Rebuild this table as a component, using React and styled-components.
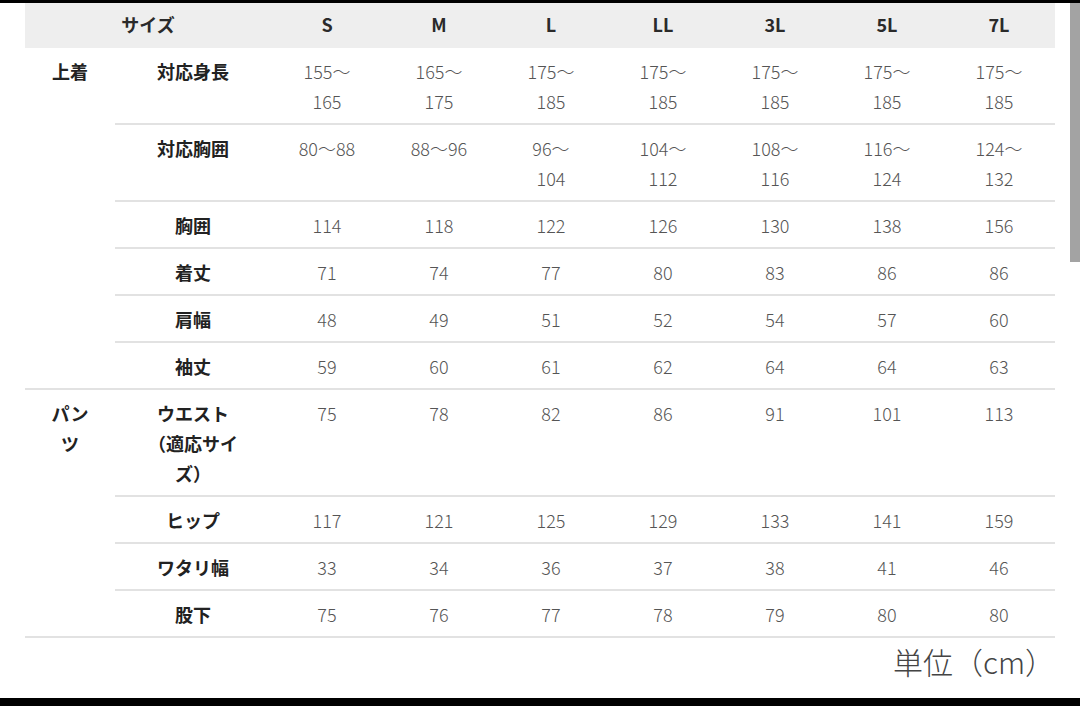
import React from "react";
import styled, { createGlobalStyle } from "styled-components";

const GlobalStyle = createGlobalStyle`
  html, body {
    margin: 0;
    padding: 0;
    background: #fff;
  }
  body {
    font-family: "Noto Sans CJK JP", "Noto Sans", sans-serif;
  }
`;

const SIZES = ["S", "M", "L", "LL", "3L", "5L", "7L"];

const SECTIONS = [
  {
    name: "上着",
    rows: [
      { label: "対応身長", values: ["155〜\n165", "165〜\n175", "175〜\n185", "175〜\n185", "175〜\n185", "175〜\n185", "175〜\n185"] },
      { label: "対応胸囲", values: ["80〜88", "88〜96", "96〜\n104", "104〜\n112", "108〜\n116", "116〜\n124", "124〜\n132"] },
      { label: "胸囲", values: ["114", "118", "122", "126", "130", "138", "156"] },
      { label: "着丈", values: ["71", "74", "77", "80", "83", "86", "86"] },
      { label: "肩幅", values: ["48", "49", "51", "52", "54", "57", "60"] },
      { label: "袖丈", values: ["59", "60", "61", "62", "64", "64", "63"] },
    ],
  },
  {
    name: "パンツ",
    rows: [
      { label: "ウエスト（適応サイズ）", values: ["75", "78", "82", "86", "91", "101", "113"] },
      { label: "ヒップ", values: ["117", "121", "125", "129", "133", "141", "159"] },
      { label: "ワタリ幅", values: ["33", "34", "36", "37", "38", "41", "46"] },
      { label: "股下", values: ["75", "76", "77", "78", "79", "80", "80"] },
    ],
  },
];

const Page = styled.div`
  position: relative;
  height: 100vh;
  display: flex;
  flex-direction: column;
  overflow: hidden;
`;

const TopEdge = styled.div`
  height: 3px;
  background: #000;
  flex: none;
`;

const BottomEdge = styled.div`
  height: 8px;
  background: #000;
  flex: none;
`;

const Main = styled.main`
  flex: 1;
  padding-left: 25px;
`;

const Scrollbar = styled.div`
  position: absolute;
  top: 3px;
  right: 0;
  width: 10px;
  height: 259px;
  background: #a3a3a3;
`;

const Table = styled.table`
  width: 1030px;
  border-collapse: collapse;
  table-layout: fixed;
  font-size: 18px;
`;

const HeadCell = styled.th`
  height: 45px;
  padding: 0 0 3px;
  box-sizing: border-box;
  background: #eeeeee;
  color: #2a2a2a;
  font-weight: 700;
  text-align: center;
  vertical-align: middle;
`;

const BodyCell = styled.td`
  padding: 8px ${(p) => p.$pad || 0}px 7px;
  line-height: 30px;
  text-align: center;
  vertical-align: top;
  border-bottom: 2px solid #e2e2e2;
  white-space: pre-line;
  color: ${(p) => (p.$strong ? "#222" : "#555")};
  font-weight: ${(p) => (p.$strong ? 700 : 300)};
`;

const Unit = styled.div`
  width: 1030px;
  margin-top: 3px;
  text-align: right;
  font-size: 30px;
  line-height: 40px;
  font-weight: 300;
  color: #444;
`;

export default function App() {
  return (
    <Page>
      <GlobalStyle />
      <TopEdge />
      <Main>
        <Table>
          <colgroup>
            <col style={{ width: 90 }} />
            <col style={{ width: 156 }} />
            {SIZES.map((s) => (
              <col key={s} style={{ width: 112 }} />
            ))}
          </colgroup>
          <thead>
            <tr>
              <HeadCell colSpan={2}>サイズ</HeadCell>
              {SIZES.map((s) => (
                <HeadCell key={s}>{s}</HeadCell>
              ))}
            </tr>
          </thead>
          <tbody>
            {SECTIONS.map((section) =>
              section.rows.map((row, i) => (
                <tr key={section.name + row.label}>
                  {i === 0 && (
                    <BodyCell $strong $pad={22} rowSpan={section.rows.length}>
                      {section.name}
                    </BodyCell>
                  )}
                  <BodyCell $strong $pad={25}>
                    {row.label}
                  </BodyCell>
                  {row.values.map((v, j) => (
                    <BodyCell key={j}>{v}</BodyCell>
                  ))}
                </tr>
              ))
            )}
          </tbody>
        </Table>
        <Unit>単位（cm）</Unit>
      </Main>
      <BottomEdge />
      <Scrollbar />
    </Page>
  );
}
